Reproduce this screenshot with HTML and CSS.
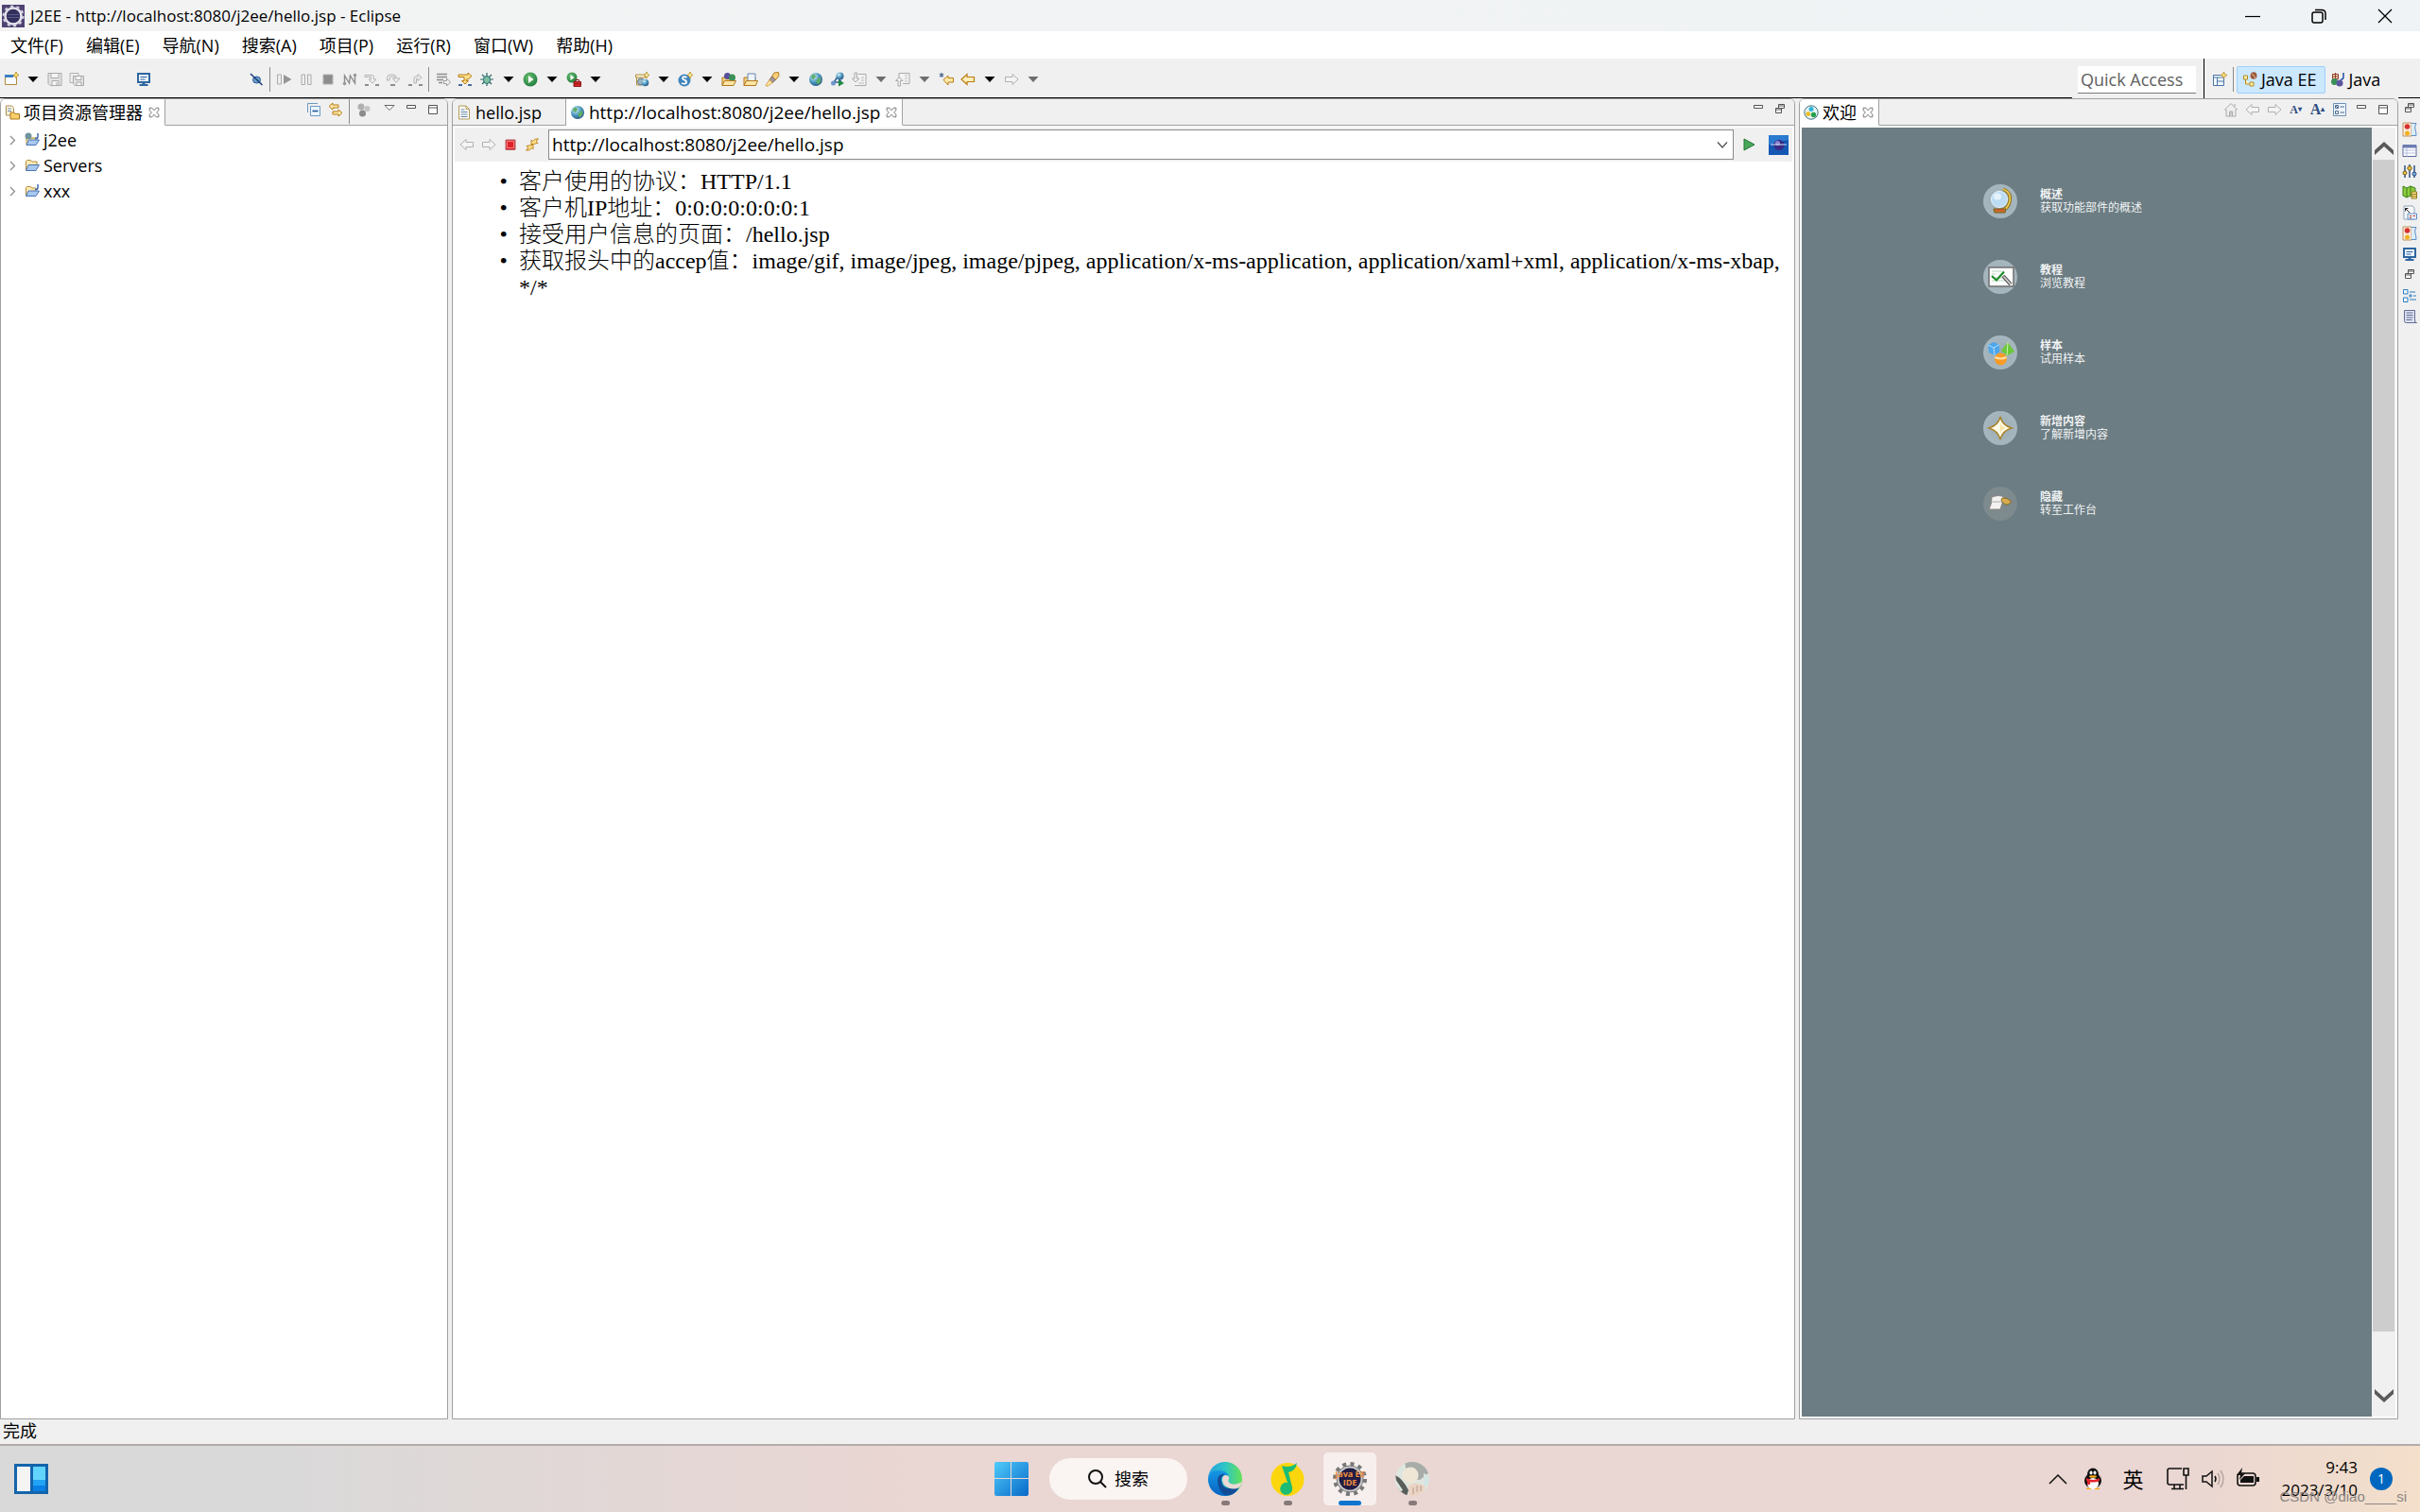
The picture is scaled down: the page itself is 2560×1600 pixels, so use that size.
FILE: index.html
```html
<!DOCTYPE html>
<html lang="zh-CN">
<head>
  <meta charset="UTF-8" />
  <meta name="viewport" content="width=device-width, initial-scale=1" />
  <title>J2EE - http://localhost:8080/j2ee/hello.jsp - Eclipse</title>
  <link rel="stylesheet" href="styles.css">
</head>
<body>

  <!-- Icon sprite -->
  <svg class="sprite" aria-hidden="true">
    <defs>
      <linearGradient id="gWin" x1="0" y1="0" x2="1" y2="1"><stop offset="0" stop-color="#50ccfb"/><stop offset="1" stop-color="#0768c8"/></linearGradient>
      <linearGradient id="gEdge" x1="0" y1="0" x2="1" y2="0"><stop offset="0" stop-color="#259fe4"/><stop offset=".5" stop-color="#2dc5c5"/><stop offset="1" stop-color="#66e256"/></linearGradient>
      <linearGradient id="gEdge2" x1="0" y1="0" x2="0" y2="1"><stop offset="0" stop-color="#1597e5"/><stop offset="1" stop-color="#0a62c0"/></linearGradient>
      <radialGradient id="gGlobe" cx=".35" cy=".3" r=".8"><stop offset="0" stop-color="#d8f1fa"/><stop offset=".5" stop-color="#4f9ac0"/><stop offset="1" stop-color="#1f4a7c"/></radialGradient>
      <radialGradient id="gRun" cx=".4" cy=".35" r=".7"><stop offset="0" stop-color="#6cc070"/><stop offset="1" stop-color="#1c7a3b"/></radialGradient>
      <radialGradient id="gDisc" cx=".5" cy=".5" r=".5"><stop offset="0" stop-color="#9aabb3"/><stop offset="1" stop-color="#a7b7bf"/></radialGradient>
      <clipPath id="cAvatar"><circle cx="18" cy="18" r="18"/></clipPath>
    </defs>

    <symbol id="down" viewBox="0 0 16 16"><path d="M2.500 5h11L8 11z" fill="currentColor"/></symbol>
    <symbol id="new" viewBox="0 0 16 16"><path d="M1.500 4.500h12v9h-12z" fill="#f6fafe" stroke="#b08c3c"/><path d="M1 3h9v3H1z" fill="#3f7fc0"/><path d="M13 0l1 2.500L16 3.500l-2 1L13 7l-1-2.500-2-1 2-1z" fill="#ffe680" stroke="#b38a1c" stroke-width=".8"/></symbol>
    <symbol id="save" viewBox="0 0 16 16"><path d="M1 1.500h14v13H3l-2-2z" fill="#e3e3e3" stroke="#aaa"/><path d="M4 1.500h8v5H4zM5 9.500h7v5H5zM10 11v3" fill="#f4f4f4" stroke="#aaa"/></symbol>
    <symbol id="saveall" viewBox="0 0 16 16"><path d="M1 1.500h9v10H1z" fill="#eee" stroke="#b4b4b4"/><path d="M4.500 4.500h11v10h-9l-2-2z" fill="#e3e3e3" stroke="#aaa"/><path d="M7 4.500h6v4H7zM8 11h5v3.500H8z" fill="#f4f4f4" stroke="#aaa"/></symbol>
    <symbol id="monitor" viewBox="0 0 16 16"><path d="M2 2h12v9H2z" fill="#eef5fc" stroke="#2f66a0" stroke-width="2"/><path d="M4.500 5.500h7M4.500 8h5" stroke="#2f66a0"/><path d="M6.500 11h3v2h3v2h-9v-2h3z" fill="#2f66a0"/></symbol>
    <symbol id="skip" viewBox="0 0 16 16"><ellipse cx="8.500" cy="8.500" rx="4" ry="3.500" fill="#6f9fce" stroke="#245a94"/><path d="M2 2l12.500 12" stroke="#1c3f78" stroke-width="1.600"/></symbol>
    <symbol id="resume" viewBox="0 0 16 16"><path d="M.5 3h4v10h-4z" fill="#eee" stroke="#aaa"/><path d="M7 3l8.500 5L7 13z" fill="#969696"/></symbol>
    <symbol id="pause" viewBox="0 0 16 16"><path d="M3 3h3.500v10.500H3zM9.500 3H13v10.500H9.500z" fill="#eee" stroke="#aaa"/></symbol>
    <symbol id="stop" viewBox="0 0 16 16"><path d="M3 3h10v10H3z" fill="#8c8c8c" stroke="#b0b0b0"/></symbol>
    <symbol id="stopred" viewBox="0 0 16 16"><path d="M3 3h10v10.500H3z" fill="#e0202a" stroke="#b4656a"/><path d="M4.500 4.500h7v7h-7z" fill="none" stroke="#f58080"/></symbol>
    <symbol id="disconnect" viewBox="0 0 16 16"><path d="M2.500 12V4l5 8 1-8 5 8V4" fill="none" stroke="#8c8c8c" stroke-width="1.400"/><circle cx="2.500" cy="12.500" r="1.800" fill="#999"/><circle cx="13.500" cy="3.500" r="1.800" fill="#999"/></symbol>
    <symbol id="stepinto" viewBox="0 0 16 16"><path d="M1 3.500h7.500q2 0 2 2V8h2.500l-4 4-4-4h2.500V5.500H1z" fill="#eee" stroke="#b4b4b4"/><path d="M1 14h4M12 14h4" stroke="#8c8c8c" stroke-width="2"/></symbol>
    <symbol id="stepover" viewBox="0 0 16 16"><path d="M1.500 9V6q0-3 4-3h2q4 0 4 4H15l-4 4.500L7.500 7H10q0-2-2.500-2H6Q4 5 4 7v2z" fill="#eee" stroke="#b4b4b4"/><path d="M5 14h5" stroke="#8c8c8c" stroke-width="2"/></symbol>
    <symbol id="stepreturn" viewBox="0 0 16 16"><path d="M7 12V7q0-2 2-2h2V2.500l4 3.500-4 3.500V7.500H9.500V12z" fill="#eee" stroke="#b4b4b4"/><path d="M1 14h4M12 14h4" stroke="#8c8c8c" stroke-width="2"/></symbol>
    <symbol id="frames" viewBox="0 0 16 16"><path d="M1 2.500h11M1 5.500h11M1 8.500h7M3 11.500h4" stroke="#8c8c8c" stroke-width="1.500"/><path d="M8.500 9.500h3V7l4 4-4 4v-2.500h-3z" fill="#f4f4f4" stroke="#999"/></symbol>
    <symbol id="filters" viewBox="0 0 16 16"><path d="M1 3h10V1l4 3.500L11 8H9v1.500h2.500L8 13 4.500 9.500H7V5.500H1z" fill="#ffe18a" stroke="#b87c14"/><path d="M1 14h4M11 14h4" stroke="#4a6c9c" stroke-width="2"/></symbol>
    <symbol id="bug" viewBox="0 0 16 16"><path d="M8 1v14M1 8h14M3 3l10 10M13 3L3 13" stroke="#2d6c66" stroke-width="1.200"/><ellipse cx="8" cy="8.500" rx="3.600" ry="4" fill="#7cc0a0" stroke="#2a6a74"/></symbol>
    <symbol id="run" viewBox="0 0 16 16"><circle cx="8" cy="8" r="7.500" fill="url(#gRun)"/><path d="M6 4l5.500 4L6 12z" fill="#fff"/></symbol>
    <symbol id="runext" viewBox="0 0 16 16"><circle cx="6" cy="6" r="5.500" fill="url(#gRun)"/><path d="M4.500 3l4 3-4 3z" fill="#fff"/><path d="M8 10.500h7.500v5H8z" fill="#d62a2a" stroke="#931818"/><path d="M10 10V8.500h3.500V10M8 12.800h7.500" fill="none" stroke="#931818"/></symbol>
    <symbol id="newserver" viewBox="0 0 16 16"><path d="M1.500 3h10v3h-10zM2.500 6v8h5" fill="#fbf3d6" stroke="#b08c3c"/><circle cx="7" cy="10.500" r="3.500" fill="#9fb2bd" stroke="#60788a"/><circle cx="11.500" cy="11.500" r="3.800" fill="url(#gGlobe)"/><path d="M13 0l1 2.500 2 1-2 1L13 7l-1-2.500-2-1 2-1z" fill="#fff2b0" stroke="#b38a1c" stroke-width=".8"/></symbol>
    <symbol id="servlet" viewBox="0 0 16 16"><circle cx="7" cy="9" r="6.500" fill="#3f85bd"/><path d="M9.500 6Q6 4 5 6.500q0 1.500 2 2.200 3 1 2 3-1.500 1.800-5 .3" fill="none" stroke="#fff" stroke-width="1.800"/><path d="M13 0l1 2.500 2 1-2 1L13 7l-1-2.500-2-1 2-1z" fill="#fff2b0" stroke="#b38a1c" stroke-width=".8"/></symbol>
    <symbol id="opentype" viewBox="0 0 16 16"><path d="M1 6h5l1 1.500h7L12.500 14.500H1z" fill="#f8d27c" stroke="#b07820"/><circle cx="6.500" cy="4.500" r="3.500" fill="#574f9c"/><circle cx="11.500" cy="6" r="3.500" fill="#3a9158"/><path d="M3.500 9.500h12l-2.500 5H1z" fill="#ffe5a3" stroke="#b07820"/></symbol>
    <symbol id="opentask" viewBox="0 0 16 16"><path d="M1 6h12v8.500H1z" fill="#f8d27c" stroke="#b07820"/><path d="M5 2h8v8H5z" fill="#eef4fa" stroke="#6888ac"/><path d="M3.500 9.500h12l-2 5H1z" fill="#ffe5a3" stroke="#b07820"/></symbol>
    <symbol id="torch" viewBox="0 0 16 16"><path d="M10 1l4.500-.5.500 4-3.500 4-4-3.500z" fill="#f7cf7c" stroke="#b57a1e"/><path d="M7.500 5l4 3.500-3.500 3L5 8.500z" fill="#a49a9c" stroke="#776a5c"/><path d="M5 8.500L1 14.500l2 .8 5-3.800z" fill="#ffe9a8" stroke="#d49c4a"/></symbol>
    <symbol id="globe" viewBox="0 0 16 16"><circle cx="8" cy="8" r="7" fill="url(#gGlobe)"/><path d="M4 3q3-1 4 1.500L6 8 3 6.500zM9 8l4-2 .5 4-3 3.500L8.500 11z" fill="#5fae68"/></symbol>
    <symbol id="wsexplore" viewBox="0 0 16 16"><path d="M3 13L8 5l4 6H4" fill="none" stroke="#355f96" stroke-width="1.500"/><circle cx="10.500" cy="4.500" r="4" fill="url(#gGlobe)"/><circle cx="3.500" cy="12" r="2.500" fill="#6c98c8"/><path d="M9 8.500l6 3.500-6 3.500z" fill="#228c43"/></symbol>
    <symbol id="annnext" viewBox="0 0 16 16"><path d="M7 2.500h8v12H3" fill="#f3f3f3" stroke="#aaa"/><path d="M3 1h2.500v6h2.500L4.200 11 .5 7H3z" fill="#eee" stroke="#aaa"/><path d="M10 6h3M10 9h3M7 12h6" stroke="#bbb"/></symbol>
    <symbol id="annprev" viewBox="0 0 16 16"><path d="M4 8V1.500h11v11H8" fill="#f3f3f3" stroke="#aaa"/><path d="M3 15h2.500V9.500H8L4.200 5.500.5 9.500H3z" fill="#eee" stroke="#aaa"/><path d="M10 4h3M10 7h3M10 10h3" stroke="#bbb"/></symbol>
    <symbol id="lastedit" viewBox="0 0 16 16"><path d="M5 8.500l5-4.500v2.500h5.500v4.500H10V14z" fill="#ffe9a8" stroke="#b87c14"/><path d="M3 1v5M.8 2.200l4.400 2.600M5.200 2.200L.8 4.800" stroke="#33507e"/></symbol>
    <symbol id="back" viewBox="0 0 16 16"><path d="M1 8l6-5.500v3h7.500v5H7v3z" fill="#ffeeb8" stroke="#b87c14" stroke-width="1.200"/></symbol>
    <symbol id="backoff" viewBox="0 0 16 16"><path d="M1 8l6-5.500v3h7.500v5H7v3z" fill="#f4f4f4" stroke="#b0b0b0"/></symbol>
    <symbol id="fwdoff" viewBox="0 0 16 16"><path d="M15 8L9 2.500v3H1.500v5H9v3z" fill="#f4f4f4" stroke="#b0b0b0"/></symbol>
    <symbol id="refresh" viewBox="0 0 16 16"><path d="M7 7.500V3l1.500 1.500Q11 1 14.500 2q-2 .5-2 3L14 6.500 9 7.500zM9 8.500V13l-1.500-1.500Q5 15 1.500 14q2-.5 2-3L2 9.500l5-1z" fill="#ffe18a" stroke="#b87c14" stroke-width=".9"/></symbol>
    <symbol id="playgreen" viewBox="0 0 16 16"><path d="M3 2l11 6-11 6z" fill="#47a85a" stroke="#22743a"/></symbol>
    <symbol id="explorer" viewBox="0 0 16 16"><path d="M1.500 1h6l2 2.500V11h-8z" fill="#fff7e0" stroke="#a88c50"/><path d="M3 4h4M3 6.500h4" stroke="#6a87b0"/><path d="M6 8h4l1 1.500h4.500v5.500H6z" fill="#f9cf6c" stroke="#b07820"/></symbol>
    <symbol id="close" viewBox="0 0 16 16"><path d="M2.500 2.500h3L8 5.500l2.500-3h3v3L11 8l2.500 2.500v3h-3L8 10.500l-2.500 3h-3v-3L5 8 2.500 5.500z" fill="#fff" stroke="#666"/></symbol>
    <symbol id="collapse" viewBox="0 0 16 16"><path d="M1.500 11V1.500H12" fill="none" stroke="#6c9ac4"/><path d="M4.500 4.500h10v10h-10z" fill="#eaf5fd" stroke="#6c9ac4"/><path d="M6.500 9.500h6" stroke="#1c4f8c" stroke-width="1.500"/></symbol>
    <symbol id="link" viewBox="0 0 16 16"><path d="M1 4.500L5 1v2h6v3H5v2zM15 11.500L11 8v2H5v3h6v2z" fill="#ffe9a8" stroke="#b87c14"/></symbol>
    <symbol id="task" viewBox="0 0 16 16"><circle cx="5" cy="5" r="3.500" fill="#b0b0b0"/><circle cx="11.500" cy="7" r="3" fill="#c4c4c4"/><circle cx="6.500" cy="12" r="3.500" fill="#8c8c8c"/></symbol>
    <symbol id="viewmenu" viewBox="0 0 16 16"><path d="M3 3.500h10L8 8.500z" fill="#fff" stroke="#666"/></symbol>
    <symbol id="min" viewBox="0 0 16 16"><path d="M3.500 3.500h9v3h-9z" fill="#fff" stroke="#555"/></symbol>
    <symbol id="max" viewBox="0 0 16 16"><path d="M3.500 3.500h9v9h-9zM3.500 6h9" fill="#fff" stroke="#555"/></symbol>
    <symbol id="restore" viewBox="0 0 16 16"><path d="M6.500 2.500h6v4h-6zM6.500 4h6M3.500 6.500h6v5h-6zM3.500 8h6" fill="#fff" stroke="#555"/></symbol>
    <symbol id="chev" viewBox="0 0 16 16"><path d="M5 4l4.500 4.500L5 13" fill="none" stroke="#8a8a8a" stroke-width="1.200"/></symbol>
    <symbol id="chevdown" viewBox="0 0 16 16"><path d="M3 5.500l5 5.500 5-5.500" fill="none" stroke="#555" stroke-width="1.300"/></symbol>
    <symbol id="folder" viewBox="0 0 16 16"><path d="M1.500 13V3.500l1-1h4l1 1.500H13v3" fill="#fdeab4" stroke="#b08c3c"/><path d="M4 7.500h11.500L12 13.500H1.500z" fill="#a9c8f0" stroke="#4a74b4"/></symbol>
    <symbol id="webfolder" viewBox="0 0 16 16"><path d="M2 13V6h11v2" fill="#fdeab4" stroke="#b08c3c"/><path d="M4.500 8h11L12 13.500H2z" fill="#a9c8f0" stroke="#4a74b4"/><circle cx="4" cy="4" r="3.500" fill="#6f949c"/><path d="M14 1v4q-.5 2-3 1.500" fill="none" stroke="#3f6ab0" stroke-width="1.500"/></symbol>
    <symbol id="javafolder" viewBox="0 0 16 16"><path d="M1.500 13V4.500l1-1h4l1 1.500H12v3" fill="#fdeab4" stroke="#b08c3c"/><path d="M4 8h11.500L12 13.500H1.500z" fill="#a9c8f0" stroke="#4a74b4"/><path d="M14 1v4q-.5 2-3 1.500" fill="none" stroke="#3f6ab0" stroke-width="1.500"/></symbol>
    <symbol id="file" viewBox="0 0 16 16"><path d="M2.500 1h7.500l3.500 3.500V15h-11z" fill="#fffdf4" stroke="#b09a5c"/><path d="M10 1v3.500h3.500" fill="none" stroke="#b09a5c"/><path d="M4.500 5h4M4.500 7.500h7M4.500 10h7M4.500 12.500h7" stroke="#5c82b8"/></symbol>
    <symbol id="welcome" viewBox="0 0 16 16"><circle cx="8" cy="8" r="7.200" fill="#eaf6f4" stroke="#3c7080"/><circle cx="8" cy="4.500" r="2.500" fill="#30b4d8"/><circle cx="4.800" cy="9.500" r="2.500" fill="#e8c030"/><circle cx="10.500" cy="10.500" r="2.700" fill="#26a04c"/></symbol>
    <symbol id="home" viewBox="0 0 16 16"><path d="M1.500 8L8 1.500 14.500 8H13v7H3V8z" fill="#eee" stroke="#aaa"/><path d="M6.500 15v-5h3v5M12 5V2" fill="#ccc" stroke="#aaa"/></symbol>
    <symbol id="options" viewBox="0 0 16 16"><path d="M1.500 1.500h13v13h-13z" fill="#eef5fb" stroke="#6c90b4"/><path d="M3.500 3.500h3v3h-3zM3.500 9.500h3v3h-3zM8.500 5H13M8.500 11H13M4 4l2 2" fill="#fff" stroke="#4a6a90"/></symbol>
    <symbol id="openpersp" viewBox="0 0 16 16"><path d="M1.500 3.500h11v11h-11z" fill="#f3f9fd" stroke="#4a74a4"/><path d="M1.500 6h11M5.500 6v8.500M5.500 10h7" stroke="#4a74a4"/><path d="M12.500 0l1 2.500 2.500 1-2.500 1-1 2.500-1-2.500-2.500-1 2.500-1z" fill="#ffe680" stroke="#b38a1c" stroke-width=".8"/></symbol>
    <symbol id="jee" viewBox="0 0 16 16"><path d="M1.500 4h4v4h-4zM3.500 8v5h4M8 11h4v4H8z" fill="#fff2b0" stroke="#b38a1c"/><ellipse cx="12" cy="4" rx="3.500" ry="3.800" fill="#9c5a3a"/><path d="M9.500 2q3 1 4.500 5" fill="none" stroke="#e8c0a0"/></symbol>
    <symbol id="java" viewBox="0 0 16 16"><path d="M2.500 2.500h6v5h-6zM5.500 1v6.500M2.500 5h6" fill="#f4d8c0" stroke="#93402a"/><circle cx="4.500" cy="10.500" r="3.500" fill="#3a9158"/><circle cx="10" cy="12" r="3.500" fill="#5d559e"/><path d="M14 1v5q-.5 2.500-3 2" fill="none" stroke="#2f5aa8" stroke-width="1.600"/></symbol>
    <symbol id="snippets" viewBox="0 0 16 16"><path d="M1 1h9v14H1z" fill="#fbeedd" stroke="#c09060"/><circle cx="5.500" cy="5" r="2.800" fill="#d83030"/><circle cx="5.500" cy="12" r="2.500" fill="#f0b020"/><path d="M10 1.500h5q-2 4-1 6.500t1 6.500h-5" fill="#dcecfa" stroke="#5a90c8"/></symbol>
    <symbol id="tableicon" viewBox="0 0 16 16"><path d="M1 2.500h14v12H1z" fill="#fff" stroke="#5b6a9c"/><path d="M1 2h14v3.500H1z" fill="#6c7cb0"/><path d="M5 5v9.500M1 8h14M1 11h14" stroke="#b4bede"/></symbol>
    <symbol id="sliders" viewBox="0 0 16 16"><path d="M3 2v13M8 1v14M13 2v13" stroke="#2f5080" stroke-width="1.500"/><circle cx="3" cy="10" r="2" fill="#f3c940" stroke="#705c20"/><circle cx="8" cy="5" r="2.200" fill="#f3c940" stroke="#705c20"/><circle cx="13" cy="11" r="2" fill="#7ab0e4" stroke="#2f5080"/></symbol>
    <symbol id="datasource" viewBox="0 0 16 16"><path d="M1 2l4 2 4-2 5 2v10l-5-2-4 2-4-2z" fill="#8ccc3c" stroke="#3c7c1c"/><path d="M5 4v10M9 2v10" stroke="#3c7c1c"/><path d="M10 8h5.500v7H10zM10 10.500h5.500M10 12.800h5.500" fill="#fbe68c" stroke="#93781c"/></symbol>
    <symbol id="props" viewBox="0 0 16 16"><path d="M2 1h9l2 2v12H2z" fill="#fff" stroke="#8ea2bc"/><path d="M3.500 3.500l5 5M3.500 3.500h3M3.500 3.500v3" stroke="#222"/><path d="M6 9h9.500v6H6z" fill="#e8f2fb" stroke="#5c8cc0"/><path d="M8 11.500h2M11.500 11.500h2.500M8 13.500h2" stroke="#c0392b"/></symbol>
    <symbol id="outline" viewBox="0 0 16 16"><path d="M1.500 1.500h4.500v4.500H1.500zM1.500 10h4.500v4.500H1.500zM8 7h2v2H8z" fill="#eaf5fd" stroke="#2c7cc0"/><path d="M8 4h6M8 12h7M12 8h3" stroke="#2c7cc0"/></symbol>
    <symbol id="scroll" viewBox="0 0 16 16"><path d="M2.500 1.500h11V12q0 2.500 2 2.500h-11q-2 0-2-2z" fill="#dfe3f4" stroke="#646c94"/><path d="M4.500 4h7M4.500 6.500h7M4.500 9h7M4.500 11.500h6" stroke="#646c94"/></symbol>
  </svg>

  <header class="titlebar">
    <svg class="app-logo" viewBox="0 0 24 24"><path d="M0 0h24v24H0z" fill="#4f4474"/><circle cx="12" cy="12" r="8.500" fill="none" stroke="#e4e2ec" stroke-width="2.500"/><circle cx="12" cy="12" r="10.300" fill="none" stroke="#d5d2e0" stroke-width="2.500" stroke-dasharray="3 3.470"/><circle cx="12" cy="12" r="7" fill="#33305c"/><path d="M6 10.500h12M5.500 13.500h13" stroke="#5b5890"/></svg>
    <h1 class="titlebar-text">J2EE - http://localhost:8080/j2ee/hello.jsp - Eclipse</h1>
    <div class="window-buttons">
      <button aria-label="最小化"><svg viewBox="0 0 16 16"><path d="M0 8.500h16" stroke="#000" stroke-width="1.200"/></svg></button>
      <button aria-label="还原"><svg viewBox="0 0 16 16"><rect x="1" y="4" width="11" height="11" rx="2" fill="none" stroke="#000" stroke-width="1.500"/><path d="M4 1.500h7q4 0 4 4V12" fill="none" stroke="#000" stroke-width="1.500"/></svg></button>
      <button aria-label="关闭"><svg viewBox="0 0 16 16"><path d="M1 1l14 14M15 1L1 15" stroke="#000" stroke-width="1.300"/></svg></button>
    </div>
  </header>

  <nav class="menubar">
    <button>文件(F)</button>
    <button>编辑(E)</button>
    <button>导航(N)</button>
    <button>搜索(A)</button>
    <button>项目(P)</button>
    <button>运行(R)</button>
    <button>窗口(W)</button>
    <button>帮助(H)</button>
  </nav>

  <div class="toolbar">
    <div class="tools">
      <button class="tool" aria-label="新建"><svg><use href="#new"/></svg></button>
      <button class="tool" aria-label="新建菜单"><svg><use href="#down"/></svg></button>
      <button class="tool" aria-label="保存"><svg><use href="#save"/></svg></button>
      <button class="tool" aria-label="全部保存"><svg><use href="#saveall"/></svg></button>
      <span class="space-m"></span>
      <button class="tool" aria-label="控制台"><svg><use href="#monitor"/></svg></button>
      <span class="space-l"></span>
      <button class="tool" aria-label="跳过断点"><svg><use href="#skip"/></svg></button>
      <span class="sep"></span>
      <button class="tool" aria-label="继续"><svg><use href="#resume"/></svg></button>
      <button class="tool" aria-label="暂挂"><svg><use href="#pause"/></svg></button>
      <button class="tool" aria-label="终止"><svg><use href="#stop"/></svg></button>
      <button class="tool" aria-label="断开连接"><svg><use href="#disconnect"/></svg></button>
      <button class="tool" aria-label="单步跳入"><svg><use href="#stepinto"/></svg></button>
      <button class="tool" aria-label="单步跳过"><svg><use href="#stepover"/></svg></button>
      <button class="tool" aria-label="单步返回"><svg><use href="#stepreturn"/></svg></button>
      <span class="sep"></span>
      <button class="tool" aria-label="放至帧"><svg><use href="#frames"/></svg></button>
      <button class="tool" aria-label="单步过滤器"><svg><use href="#filters"/></svg></button>
      <button class="tool" aria-label="调试"><svg><use href="#bug"/></svg></button>
      <button class="tool" aria-label="调试菜单"><svg><use href="#down"/></svg></button>
      <button class="tool" aria-label="运行"><svg><use href="#run"/></svg></button>
      <button class="tool" aria-label="运行菜单"><svg><use href="#down"/></svg></button>
      <button class="tool" aria-label="外部工具"><svg><use href="#runext"/></svg></button>
      <button class="tool" aria-label="外部工具菜单"><svg><use href="#down"/></svg></button>
      <span class="space-s"></span>
      <button class="tool" aria-label="新建服务器"><svg><use href="#newserver"/></svg></button>
      <button class="tool" aria-label="服务器菜单"><svg><use href="#down"/></svg></button>
      <button class="tool" aria-label="新建 Servlet"><svg><use href="#servlet"/></svg></button>
      <button class="tool" aria-label="Servlet 菜单"><svg><use href="#down"/></svg></button>
      <button class="tool" aria-label="打开类型"><svg><use href="#opentype"/></svg></button>
      <button class="tool" aria-label="打开任务"><svg><use href="#opentask"/></svg></button>
      <button class="tool" aria-label="搜索"><svg><use href="#torch"/></svg></button>
      <button class="tool" aria-label="搜索菜单"><svg><use href="#down"/></svg></button>
      <button class="tool" aria-label="浏览器"><svg><use href="#globe"/></svg></button>
      <button class="tool" aria-label="Web Service"><svg><use href="#wsexplore"/></svg></button>
      <button class="tool" aria-label="下一注释"><svg><use href="#annnext"/></svg></button>
      <button class="tool off" aria-label="下一注释菜单"><svg><use href="#down"/></svg></button>
      <button class="tool" aria-label="上一注释"><svg><use href="#annprev"/></svg></button>
      <button class="tool off" aria-label="上一注释菜单"><svg><use href="#down"/></svg></button>
      <button class="tool" aria-label="上次编辑位置"><svg><use href="#lastedit"/></svg></button>
      <button class="tool" aria-label="后退"><svg><use href="#back"/></svg></button>
      <button class="tool" aria-label="后退菜单"><svg><use href="#down"/></svg></button>
      <button class="tool" aria-label="前进"><svg><use href="#fwdoff"/></svg></button>
      <button class="tool off" aria-label="前进菜单"><svg><use href="#down"/></svg></button>
    </div>
    <div class="quick">
      <input type="text" placeholder="Quick Access" aria-label="Quick Access">
    </div>
    <div class="perspectives">
      <button class="tool" aria-label="打开透视图"><svg><use href="#openpersp"/></svg></button>
      <span class="sep"></span>
      <button class="persp active"><svg><use href="#jee"/></svg>Java EE</button>
      <button class="persp"><svg><use href="#java"/></svg>Java</button>
    </div>
    <div class="toolbar-end"></div>
  </div>

  <main class="workbench">
    <div class="views">

      <!-- Project explorer -->
      <section class="view">
        <div class="tabs">
          <div class="tab active"><svg><use href="#explorer"/></svg>项目资源管理器<button class="tab-close" aria-label="关闭"><svg><use href="#close"/></svg></button></div>
          <div class="tab-tools">
            <button class="tool" aria-label="全部折叠"><svg><use href="#collapse"/></svg></button>
            <button class="tool" aria-label="与编辑器链接"><svg><use href="#link"/></svg></button>
            <span class="sep"></span>
            <button class="tool" aria-label="任务"><svg><use href="#task"/></svg></button>
            <span class="space-xs"></span>
            <button class="tool" aria-label="视图菜单"><svg><use href="#viewmenu"/></svg></button>
            <button class="tool" aria-label="最小化"><svg><use href="#min"/></svg></button>
            <button class="tool" aria-label="最大化"><svg><use href="#max"/></svg></button>
          </div>
        </div>
        <ul class="tree">
          <li><svg><use href="#chev"/></svg><svg><use href="#webfolder"/></svg>j2ee</li>
          <li><svg><use href="#chev"/></svg><svg><use href="#folder"/></svg>Servers</li>
          <li><svg><use href="#chev"/></svg><svg><use href="#javafolder"/></svg>xxx</li>
        </ul>
      </section>

      <!-- Editor with the internal browser -->
      <section class="view">
        <div class="tabs">
          <div class="tab tab-file"><svg><use href="#file"/></svg>hello.jsp</div>
          <div class="tab active url"><svg><use href="#globe"/></svg>http://localhost:8080/j2ee/hello.jsp<button class="tab-close" aria-label="关闭"><svg><use href="#close"/></svg></button></div>
          <div class="tab-tools">
            <button class="tool" aria-label="最小化"><svg><use href="#min"/></svg></button>
            <button class="tool" aria-label="还原"><svg><use href="#restore"/></svg></button>
          </div>
        </div>
        <div class="browser-bar">
          <button class="tool" aria-label="后退"><svg><use href="#backoff"/></svg></button>
          <button class="tool" aria-label="前进"><svg><use href="#fwdoff"/></svg></button>
          <button class="tool" aria-label="停止"><svg><use href="#stopred"/></svg></button>
          <button class="tool" aria-label="刷新"><svg><use href="#refresh"/></svg></button>
          <div class="address url">
            <input type="text" value="http://localhost:8080/j2ee/hello.jsp" aria-label="地址">
            <button class="tool" aria-label="历史"><svg><use href="#chevdown"/></svg></button>
          </div>
          <button class="tool go" aria-label="转至"><svg><use href="#playgreen"/></svg></button>
          <svg class="throbber" viewBox="0 0 21 21"><path d="M0 0h21v21H0z" fill="#1458b4"/><path d="M0 0h21v5L0 10z" fill="#2a7ad0"/><circle cx="11" cy="10.500" r="5.500" fill="#3a2a86"/><circle cx="9.500" cy="8.500" r="2.500" fill="#8c86d0"/><path d="M2 10h17" stroke="#d4e4fa"/></svg>
        </div>
        <ul class="page">
          <li>客户使用的协议：HTTP/1.1</li>
          <li>客户机IP地址：0:0:0:0:0:0:0:1</li>
          <li>接受用户信息的页面：/hello.jsp</li>
          <li>获取报头中的accep值：image/gif, image/jpeg, image/pjpeg, application/x-ms-application, application/xaml+xml, application/x-ms-xbap, */*</li>
        </ul>
      </section>

      <!-- Welcome view -->
      <section class="view">
        <div class="tabs">
          <div class="tab active"><svg><use href="#welcome"/></svg>欢迎<button class="tab-close" aria-label="关闭"><svg><use href="#close"/></svg></button></div>
          <div class="tab-tools">
            <button class="tool" aria-label="主页"><svg><use href="#home"/></svg></button>
            <button class="tool" aria-label="后退"><svg><use href="#backoff"/></svg></button>
            <button class="tool" aria-label="前进"><svg><use href="#fwdoff"/></svg></button>
            <button class="tool letter" aria-label="缩小">A<sup>▾</sup></button>
            <button class="tool letter big" aria-label="放大">A<sup>▴</sup></button>
            <button class="tool" aria-label="定制"><svg><use href="#options"/></svg></button>
            <button class="tool" aria-label="最小化"><svg><use href="#min"/></svg></button>
            <button class="tool" aria-label="最大化"><svg><use href="#max"/></svg></button>
          </div>
        </div>
        <div class="welcome">
          <div class="welcome-body">
            <a class="card" href="#overview">
              <svg viewBox="0 0 36 36"><circle cx="18" cy="18" r="18" fill="url(#gDisc)"/><path d="M21 5q9 4 7 13t-9 9" fill="none" stroke="#8c6a14" stroke-width="3.500"/><path d="M21 5q9 4 7 13t-9 9" fill="none" stroke="#e6c850" stroke-width="1.800"/><circle cx="17" cy="16" r="8.500" fill="#bcdcf4" stroke="#e8f4fc"/><ellipse cx="15" cy="13" rx="4" ry="3.500" fill="#e4f3fd"/><path d="M11 26h13l-1 4H12z" fill="#b8862c" stroke="#7a5816"/><path d="M13 27.500h9" stroke="#e04a30" stroke-width="1.500"/></svg>
              <span><b>概述</b>获取功能部件的概述</span>
            </a>
            <a class="card" href="#tutorials">
              <svg viewBox="0 0 36 36"><circle cx="18" cy="18" r="18" fill="url(#gDisc)"/><path d="M6 8h26v20H6z" fill="#fff" stroke="#6e6e6e" stroke-width="1.500"/><path d="M9 12h11M9 15h4M9 19h16M9 22h14" stroke="#b8d4c0"/><path d="M9 17l5 4.500 8-9" fill="none" stroke="#1e8c2c" stroke-width="2.200"/><path d="M21 17l8 9" stroke="#555" stroke-width="4"/><path d="M21.500 17.500l8 9" stroke="#ddd" stroke-width="1.500"/></svg>
              <span><b>教程</b>浏览教程</span>
            </a>
            <a class="card" href="#samples">
              <svg viewBox="0 0 36 36"><circle cx="18" cy="18" r="18" fill="url(#gDisc)"/><path d="M5 10l6-3 6 2.500v8L12 21l-6-3z" fill="#4ba6ec"/><path d="M5 10l6 3 6-3.500M11 13l1 8" fill="none" stroke="#b6dffb"/><path d="M26 7l7 10-8 4.500L19 16z" fill="#6cc83c"/><path d="M26 7l-1 14.500" stroke="#d0f0b4"/><circle cx="18.500" cy="25" r="6.500" fill="#f89c28"/><path d="M12.500 23q6 3 12 0" fill="none" stroke="#fde0a8" stroke-width="2"/></svg>
              <span><b>样本</b>试用样本</span>
            </a>
            <a class="card" href="#whatsnew">
              <svg viewBox="0 0 36 36"><circle cx="18" cy="18" r="18" fill="url(#gDisc)"/><path d="M18 6q2 9 12 12-10 3-12 12-2-9-12-12 10-3 12-12z" fill="#fffbe8" stroke="#a8842c" stroke-width="1.500"/><path d="M18 12q1 5 6 6-5 1-6 6" fill="#fbe3a0"/></svg>
              <span><b>新增内容</b>了解新增内容</span>
            </a>
            <a class="card" href="#workbench">
              <svg viewBox="0 0 36 36"><circle cx="18" cy="18" r="18" fill="#7d8a8e"/><path d="M9 11q8-3 13 0l-4 13H6q3-5 3-13z" fill="#f4f2f0" stroke="#8a8480"/><path d="M8.500 16h12" stroke="#aaa"/><path d="M20 12q5-1 10 4l-4 3q-5 0-7-5z" fill="#d8ac50" stroke="#8a6a24"/></svg>
              <span><b>隐藏</b>转至工作台</span>
            </a>
          </div>
          <div class="scrollbar">
            <svg viewBox="0 0 20 16"><path d="M0 15V10L10 1l10 9v5L10 6z" fill="#5a5a5a"/></svg>
            <div class="thumb"></div>
            <svg viewBox="0 0 20 16"><path d="M0 1v5l10 9 10-9V1L10 10z" fill="#5a5a5a"/></svg>
          </div>
        </div>
      </section>
    </div>

    <aside class="strip">
      <button class="tool" aria-label="还原"><svg><use href="#restore"/></svg></button>
      <button class="tool" aria-label="标记"><svg><use href="#snippets"/></svg></button>
      <button class="tool" aria-label="属性"><svg><use href="#tableicon"/></svg></button>
      <button class="tool" aria-label="服务器"><svg><use href="#sliders"/></svg></button>
      <button class="tool" aria-label="数据源"><svg><use href="#datasource"/></svg></button>
      <button class="tool" aria-label="片段"><svg><use href="#props"/></svg></button>
      <button class="tool" aria-label="问题"><svg><use href="#snippets"/></svg></button>
      <button class="tool" aria-label="控制台"><svg><use href="#monitor"/></svg></button>
      <button class="tool" aria-label="还原"><svg><use href="#restore"/></svg></button>
      <button class="tool" aria-label="大纲"><svg><use href="#outline"/></svg></button>
      <button class="tool" aria-label="任务列表"><svg><use href="#scroll"/></svg></button>
    </aside>
  </main>

  <div class="statusbar">完成</div>

  <footer class="taskbar">
    <div class="task-left">
      <button class="task-icon" aria-label="小组件"><svg viewBox="0 0 36 36"><path d="M0 2h36v32H0z" fill="#1464ac"/><path d="M3 5h14v26H3z" fill="#f4f4f4"/><path d="M20 5h13v14H20z" fill="#62d4fc"/><path d="M20 19h13v6H20z" fill="#22a4f4"/><path d="M20 25h13v6H20z" fill="#0a80e4"/></svg></button>
    </div>
    <div class="task-center">
      <button class="task-icon" aria-label="开始"><svg viewBox="0 0 36 36"><path d="M0 2q0-2 2-2h15v17H0zM18 0h16q2 0 2 2v15H18zM0 18h17v18H2q-2 0-2-2zM18 18h18v16q0 2-2 2H18z" fill="url(#gWin)"/></svg></button>
      <button class="search"><svg viewBox="0 0 20 20"><circle cx="8" cy="8" r="7" fill="none" stroke="#111" stroke-width="2"/><path d="M13 13l6 6" stroke="#111" stroke-width="2"/></svg>搜索</button>
      <button class="task-icon app" aria-label="Edge"><svg viewBox="0 0 36 36"><circle cx="18" cy="18" r="18" fill="url(#gEdge)"/><path d="M0 18Q1 9 11 9q9 0 11 6-7-3-8 4 0 8 8 10 6 1 11-2-5 9-15 9Q1 35 0 18z" fill="url(#gEdge2)"/><path d="M10 18q2-6 8-5-5 2-4 7 1 8 10 8 5 0 9-2-5 10-14 9-9-3-9-17z" fill="#124c96"/><path d="M15 19q0-5 4-5 4 1 3 4-2 3 2 5 5 2 12-2l-3 6q-6 3-12 0-6-3-6-8z" fill="#ecd8d5"/></svg></button>
      <button class="task-icon app" aria-label="QQ音乐"><svg viewBox="0 0 36 36"><circle cx="18" cy="18.500" r="17.500" fill="#fcd60c"/><path d="M12 4q9 3 16-3-1 8-9 10l4 16a6.500 6.500 0 1 1-5-5z" fill="#1cbc74"/></svg></button>
      <button class="task-icon app current" aria-label="Eclipse"><svg viewBox="0 0 36 36"><circle cx="18" cy="18" r="16" fill="none" stroke="#777" stroke-width="4" stroke-dasharray="4 4.378"/><circle cx="18" cy="18" r="14" fill="#ccc" stroke="#777"/><circle cx="18" cy="18" r="11.500" fill="#231c44"/><text x="18" y="16" class="logo-text">Java EE</text><text x="18" y="25" class="logo-text">IDE</text></svg></button>
      <button class="task-icon app" aria-label="头像"><svg viewBox="0 0 36 36"><g clip-path="url(#cAvatar)"><path d="M0 0h36v36H0z" fill="#dfe6df"/><path d="M10 0h20q6 4 5 12l-9 7q-8 0-14-8z" fill="#a8aca8"/><path d="M30 12q6 2 6 10l-6 4z" fill="#d4e6e4"/><circle cx="16" cy="14" r="8.500" fill="#efe6d6"/><path d="M0 14q8 4 14 16l-2 6H4z" fill="#5a5e5a"/><path d="M0 18l8 12-8 4z" fill="#dfe8e2"/><path d="M14 25q8-5 18 1l-4 10H14z" fill="#ecd4c4"/><path d="M19 27v7M23 25v7M27 25v6" stroke="#b89888"/></g></svg></button>
    </div>
    <div class="task-right">
      <svg class="tray" viewBox="0 0 24 24"><path d="M3 17l9-9 9 9" fill="none" stroke="#111" stroke-width="1.500"/></svg>
      <svg class="tray" viewBox="0 0 20 24"><ellipse cx="10" cy="14" rx="9" ry="8" fill="#111"/><ellipse cx="10" cy="7.500" rx="6" ry="7" fill="#111"/><ellipse cx="10" cy="17" rx="6" ry="6" fill="#fff"/><path d="M3 11q7 4 14 0v3q-7 3-14 0zM4 13h3v5H4z" fill="#e3262c"/><ellipse cx="8" cy="5.500" rx="1.500" ry="2" fill="#fff"/><ellipse cx="12" cy="5.500" rx="1.500" ry="2" fill="#fff"/><ellipse cx="10" cy="9.500" rx="4" ry="1.300" fill="#f6a81c"/><path d="M3 22q3-2 6 1H3zM11 23q3-3 6-1v1z" fill="#f6a81c"/></svg>
      <span class="ime">英</span>
      <svg class="tray" viewBox="0 0 24 24"><path d="M16 1H3Q1 1 1 3v13q0 2 2 2h15M8 18v4M14 18v4M5 22.500h13" fill="none" stroke="#111" stroke-width="1.600"/><path d="M18 1h5v7h-5zM20.500 8v15" fill="none" stroke="#111" stroke-width="1.600"/></svg>
      <svg class="tray" viewBox="0 0 24 24"><path d="M1 9h4l6-5v16l-6-5H1z" fill="none" stroke="#111" stroke-width="1.500"/><path d="M14 9q2 3 0 6" fill="none" stroke="#111" stroke-width="1.500"/><path d="M17 6q4 6 0 12M20 3q6 9 0 18" fill="none" stroke="#b5a5a2" stroke-width="1.500"/></svg>
      <svg class="tray" viewBox="0 0 24 24"><rect x="1" y="6" width="19" height="13" rx="3" fill="none" stroke="#111" stroke-width="1.600"/><path d="M8 9h10v7H4v-3z" fill="#111"/><path d="M21 10h3v5h-3zM6 0L0 8h4l-1 5 6-7H5z" fill="#111"/></svg>
      <div class="clock">9:43<br>2023/3/10</div>
      <span class="badge">1</span>
    </div>
    <span class="watermark">CSDN @diao____si</span>
  </footer>

</body>
</html>
```
FILE: styles.css
```css
* {
  box-sizing: border-box;
  margin: 0;
  padding: 0;
}

body {
  height: 100vh;
  display: flex;
  flex-direction: column;
  overflow: hidden;
  background: #f0f0f0;
  color: #000;
  font-family: "Open Sans", "Noto Sans CJK SC", sans-serif;
  font-size: 18px;
  line-height: 24px;
}

button,
input {
  border: none;
  background: none;
  font: inherit;
  color: inherit;
  outline: none;
}

svg {
  display: block;
  width: 16px;
  height: 16px;
  flex: none;
}

.sprite {
  position: absolute;
  width: 0;
  height: 0;
}

/* Title bar and menu */
.titlebar {
  display: flex;
  align-items: center;
  height: 33px;
  padding-left: 2px;
  background: linear-gradient(to right, #f3f3f3, #eff3f5);
}

.app-logo {
  width: 24px;
  height: 24px;
}

.titlebar-text {
  flex: 1;
  padding-left: 6px;
  font-size: 17px;
  font-weight: normal;
}

.window-buttons {
  display: flex;
  padding-right: 2px;
}

.window-buttons button {
  width: 70px;
  height: 33px;
}

.window-buttons svg {
  margin: 0 auto;
}

.menubar {
  display: flex;
  gap: 24px;
  height: 29px;
  padding-left: 11px;
  background: #fff;
}

/* Toolbar */
.toolbar {
  display: flex;
  height: 42px;
}

.tools {
  flex: 1;
  display: flex;
  align-items: center;
  padding-top: 2px;
  border-bottom: 1px solid #000;
}

.tool {
  display: flex;
  align-items: center;
  justify-content: center;
  width: 23px;
  height: 22px;
  flex: none;
}

.off {
  color: #6e6e6e;
}

.sep {
  width: 1px;
  height: 26px;
  margin: 0 3px;
  background: #8a8a8a;
}

.space-xs {
  width: 4px;
}

.space-s {
  width: 26px;
}

.space-m {
  width: 48px;
}

.space-l {
  width: 96px;
}

.quick {
  padding: 8px 8px 0 6px;
  border-right: 1px solid #000;
}

.quick input {
  width: 125px;
  height: 29px;
  padding-left: 3px;
  background: #fff;
  border-bottom: 1px solid #7a7a7a;
}

.quick input::placeholder {
  color: #606060;
  opacity: 1;
}

.perspectives {
  display: flex;
  align-items: center;
  width: 205px;
  padding: 2px 0 0 4px;
}

.persp {
  display: flex;
  align-items: center;
  gap: 4px;
  height: 29px;
  padding: 0 4px;
  border: 1px solid transparent;
}

.persp.active {
  padding: 0 8px 0 5px;
  background: #cce8ff;
  border-color: #99d1ff;
  border-radius: 2px;
}

.toolbar-end {
  width: 23px;
  border-bottom: 1px solid #000;
}

/* Workbench */
.workbench {
  flex: 1;
  display: flex;
  min-height: 0;
}

.views {
  flex: 1;
  display: grid;
  grid-template-columns: 474fr 1421fr 634fr;
  gap: 4px;
}

.view {
  display: flex;
  flex-direction: column;
  min-width: 0;
  background: #fff;
  border: 1px solid #a0a0a0;
  border-radius: 6px 6px 0 0;
  overflow: hidden;
}

.tabs {
  display: flex;
  height: 28px;
  background: #f0f0f0;
}

.tab {
  display: flex;
  align-items: center;
  gap: 4px;
  padding: 0 4px 0 4px;
  border-right: 1px solid #a0a0a0;
  border-bottom: 1px solid #a0a0a0;
}

.tab.active {
  background: #fff;
  border-bottom-color: #fff;
}

.tab-file {
  padding-right: 25px;
}

.tab-close {
  margin-left: 1px;
}

.tab-close svg {
  width: 14px;
  height: 14px;
}

.url {
  font-size: 19px;
}

.tab-tools {
  flex: 1;
  display: flex;
  justify-content: flex-end;
  padding-right: 4px;
  border-bottom: 1px solid #a0a0a0;
}

.letter {
  font-family: "Liberation Serif", serif;
  font-size: 12px;
  font-weight: bold;
  color: #2c4c80;
}

.letter.big {
  font-size: 16px;
}

.letter sup {
  font-size: 8px;
  line-height: 8px;
}

.tree {
  list-style: none;
  padding: 1px 5px;
}

.tree li {
  display: flex;
  align-items: center;
  gap: 4px;
  height: 27px;
}

.browser-bar {
  display: flex;
  align-items: center;
  height: 36px;
  margin: 2px 2px 0;
  padding-left: 1px;
  background: #f0f0f0;
}

.address {
  flex: 1;
  display: flex;
  align-items: center;
  height: 32px;
  margin: 0 4px 0 6px;
  background: #fff;
  border: 1px solid #8a8a8a;
}

.address input {
  flex: 1;
  padding-left: 3px;
}

.throbber {
  width: 21px;
  height: 21px;
  margin: 0 4px 0 10px;
}

.page {
  padding: 7px 10px 0 70px;
  list-style-type: "•\2002";
  font-family: "Liberation Serif", "Noto Sans CJK SC", serif;
  font-size: 24px;
  font-weight: 300;
  line-height: 28px;
}

.welcome {
  flex: 1;
  display: flex;
  margin: 2px;
}

.welcome-body {
  flex: 1;
  padding: 60px 0 0 192px;
  background: #6c7d83;
}

.card {
  display: flex;
  align-items: center;
  gap: 24px;
  height: 36px;
  margin-bottom: 44px;
  color: #f0f2f3;
  font-size: 12px;
  line-height: 14px;
  text-decoration: none;
}

.card svg {
  width: 36px;
  height: 36px;
}

.card b {
  display: block;
}

.scrollbar {
  display: flex;
  flex-direction: column;
  align-items: center;
  gap: 4px;
  width: 25px;
  padding: 14px 0;
  background: #f0f0f0;
}

.scrollbar svg {
  width: 20px;
  height: 16px;
}

.thumb {
  width: 23px;
  flex: 1;
  margin-bottom: 56px;
  background: #cdcdcd;
}

.strip {
  width: 23px;
}

.statusbar {
  height: 26px;
  padding-left: 3px;
}

/* Windows taskbar */
.taskbar {
  position: relative;
  display: grid;
  grid-template-columns: 1fr auto 1fr;
  align-items: center;
  height: 72px;
  border-top: 2px solid #b3abaa;
  background: linear-gradient(to right, #d9d9d9 0, #dad9d9 12%, #ead6d3 38%, #ead6d2 90%, #f3dfca);
}

.task-left {
  padding-left: 5px;
}

.task-center,
.task-right {
  display: flex;
  align-items: center;
}

.task-center {
  gap: 10px;
  padding-left: 4px;
}

.task-icon {
  position: relative;
  display: flex;
  align-items: center;
  justify-content: center;
  width: 56px;
  height: 56px;
  border-radius: 5px;
}

.task-icon svg {
  width: 36px;
  height: 36px;
}

.app::after {
  content: "";
  position: absolute;
  bottom: 0;
  width: 9px;
  height: 5px;
  border-radius: 3px;
  background: #87797a;
}

.app.current {
  background: #f6efee;
}

.app.current::after {
  width: 24px;
  background: #0f74d0;
}

.logo-text {
  font-size: 9px;
  font-weight: bold;
  text-anchor: middle;
  fill: #f09040;
}

.search {
  display: flex;
  align-items: center;
  justify-content: center;
  gap: 8px;
  width: 146px;
  height: 44px;
  margin: 0 2px;
  border-radius: 22px;
  background: #faf4f3;
}

.search svg {
  width: 20px;
  height: 20px;
}

.task-right {
  justify-content: flex-end;
  gap: 13px;
  padding-right: 29px;
}

.tray {
  width: 24px;
  height: 24px;
}

.ime {
  margin: 0 12px 0 6px;
  font-size: 22px;
}

.clock {
  padding-left: 10px;
  text-align: right;
  font-size: 17px;
}

.badge {
  width: 24px;
  height: 24px;
  border-radius: 50%;
  background: #0067c0;
  color: #fff;
  font-size: 14px;
  text-align: center;
}

.watermark {
  position: absolute;
  right: 14px;
  bottom: 4px;
  color: #8a8583;
  font-family: "Liberation Sans", sans-serif;
  font-size: 15px;
}
```
